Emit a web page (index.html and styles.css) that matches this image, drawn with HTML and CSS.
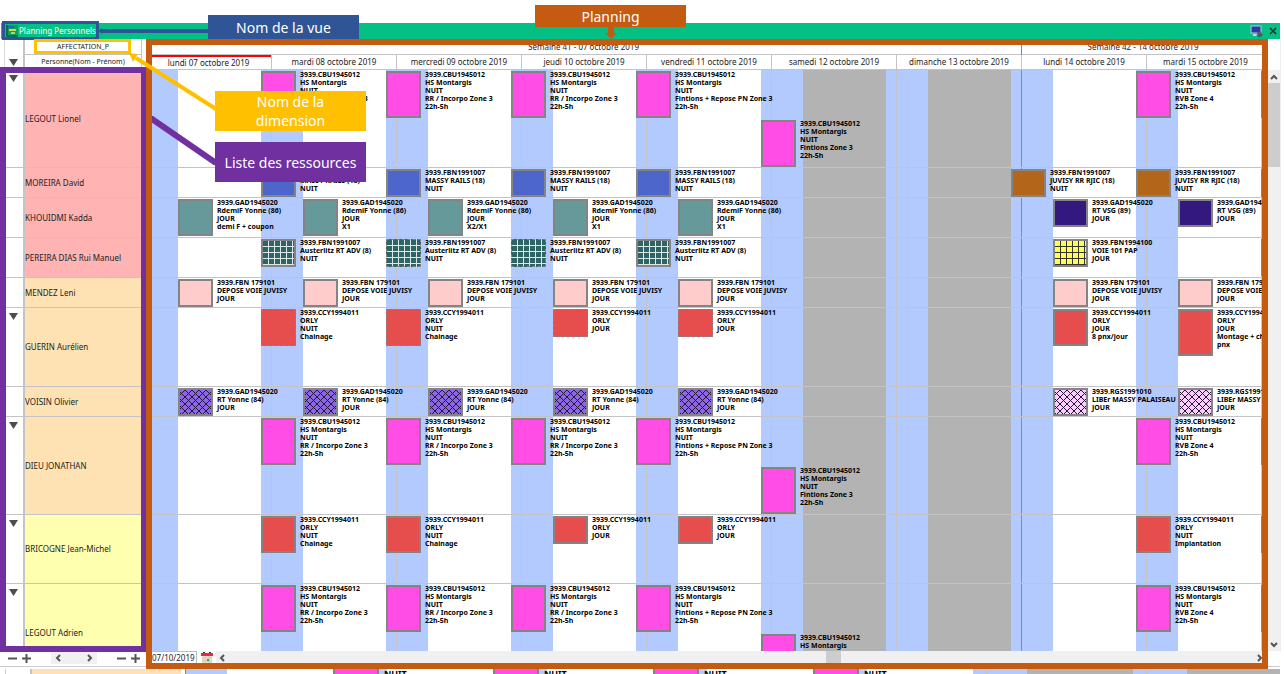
FILE: index.html
```html
<!DOCTYPE html>
<html lang="fr">
<head>
<meta charset="utf-8">
<title>Planning Personnels</title>
<link rel="stylesheet" href="styles.css">
</head>
<body>
<header class="titlebar">
  <h1 class="view-name">
    <svg class="view-icon" viewBox="0 0 12 12" aria-hidden="true">
      <path d="M0 0h12v12H0z" fill="#0a9f68"/>
      <path d="M1 0v11h11" fill="none" stroke="#123b2c" stroke-width="1"/>
      <path d="M2 2h6" stroke="#2c5fc4" stroke-width="2"/>
      <path d="M3 5h7" stroke="#e8d040" stroke-width="2"/>
      <path d="M5 8h4" stroke="#9be36a" stroke-width="2"/>
    </svg>
    Planning Personnels
  </h1>
  <div class="title-actions">
    <button class="icon-btn" aria-label="Affichage">
      <svg width="13" height="13" viewBox="0 0 13 13"><rect x="1" y="1" width="10" height="7" fill="#2a3aa8" stroke="#b9c6dc"/><path d="M3 10h5" stroke="#c8d2de" stroke-width="2"/><circle cx="9.500" cy="9.500" r="2" fill="none" stroke="#4a5360" stroke-width="2" stroke-dasharray="1.500 .6"/><circle cx="9.500" cy="9.500" r="1.500" fill="#4a5360"/></svg>
    </button>
    <button class="icon-btn" aria-label="Fermer">
      <svg width="8" height="8" viewBox="0 0 8 8"><path d="M1 1l6 6M7 1L1 7" stroke="#16302a" stroke-width="1.500"/></svg>
    </button>
  </div>
</header>

<main class="workspace">
  <section class="planner">
    <div class="head">
      <div class="head-toggle"><svg class="tri" viewBox="0 0 9 7"><path d="M0 0h9L4.500 7z"/></svg></div>
      <div class="head-names">
        <div class="dimension">AFFECTATION_P</div>
        <div class="dimension-field">Personne(Nom - Prénom)</div>
      </div>
      <div class="head-time">
        <div class="weeks"><span>Semaine 41 - 07 octobre 2019</span><span>Semaine 42 - 14 octobre 2019</span></div>
        <div class="days" id="days"></div>
      </div>
    </div>
    <div class="rows" id="rows"></div>
  </section>
  <div class="vscroll">
    <button class="icon-btn" aria-label="Monter"><svg width="8" height="6" viewBox="0 0 8 6"><path d="M1 5l3-3 3 3"/></svg></button>
    <div class="vthumb"></div>
    <button class="icon-btn" aria-label="Descendre"><svg width="8" height="6" viewBox="0 0 8 6"><path d="M1 1l3 3 3-3"/></svg></button>
  </div>
</main>

<div class="toolbar">
  <div class="left-tools">
    <button class="icon-btn" aria-label="Réduire les lignes"><svg width="9" height="9" viewBox="0 0 9 9"><path d="M0 4.500h9"/></svg></button>
    <button class="icon-btn" aria-label="Agrandir les lignes"><svg width="9" height="9" viewBox="0 0 9 9"><path d="M0 4.500h9M4.500 0v9"/></svg></button>
    <div class="pager">
      <button class="icon-btn" aria-label="Précédent"><svg width="6" height="8" viewBox="0 0 6 8"><path d="M5 1L2 4l3 3"/></svg></button>
      <button class="icon-btn" aria-label="Suivant"><svg width="6" height="8" viewBox="0 0 6 8"><path d="M1 1l3 3-3 3"/></svg></button>
    </div>
    <button class="icon-btn" aria-label="Dézoomer"><svg width="9" height="9" viewBox="0 0 9 9"><path d="M0 4.500h9"/></svg></button>
    <button class="icon-btn" aria-label="Zoomer"><svg width="9" height="9" viewBox="0 0 9 9"><path d="M0 4.500h9M4.500 0v9"/></svg></button>
  </div>
  <input class="date" type="text" value="07/10/2019" aria-label="Date de début">
  <button class="icon-btn calendar" aria-label="Calendrier">
    <svg width="12" height="12" viewBox="0 0 12 12"><rect x="1" y="3" width="10" height="9" fill="#eadfc8"/><rect y="1" width="12" height="3" fill="#f0283c"/><path d="M2 0h2M8 0h2" stroke="#333" stroke-width="2"/><path d="M1 6h10M1 9h10M4 4v8M8 4v8" stroke="#d8ccb2" stroke-width="1"/><rect x="6" y="7" width="2" height="2" fill="#13b36b"/></svg>
  </button>
  <div class="hscroll">
    <button class="icon-btn" aria-label="Défiler à gauche"><svg width="6" height="8" viewBox="0 0 6 8"><path d="M5 1L2 4l3 3"/></svg></button>
    <div class="hthumb"></div>
    <button class="icon-btn" aria-label="Défiler à droite"><svg width="6" height="8" viewBox="0 0 6 8"><path d="M1 1l3 3-3 3"/></svg></button>
  </div>
</div>

<div class="next-view">
  <div class="next-name"></div>
  <div class="next-lane" id="next"></div>
</div>

<div class="notes">
  <div class="frame frame-list"></div>
  <svg class="arrows" viewBox="0 0 400 200" aria-hidden="true">
    <path d="M216 163L152 119" stroke="#7030a0" stroke-width="6"/><path d="M148 116h6l-3 8z" fill="#7030a0"/>
  </svg>
  <div class="frame frame-planning"></div>
  <div class="frame frame-view"></div>
  <div class="frame frame-dimension"></div>
  <svg class="arrows" viewBox="0 0 400 200" aria-hidden="true">
    <path d="M216 109L136 58" stroke="#ffc000" stroke-width="4"/><path d="M129 53l9 1-5 8z" fill="#ffc000"/>
    <path d="M209 31H101" stroke="#2f5597" stroke-width="4"/><path d="M98 31l4-3v6z" fill="#2f5597"/>
  </svg>
  <div class="note note-view">Nom de la vue</div>
  <div class="note note-dimension">Nom de la dimension</div>
  <div class="note note-list">Liste des ressources</div>
  <div class="note note-planning">Planning
    <svg class="down" viewBox="0 0 12 12" aria-hidden="true"><path d="M3 0h6v6h3l-6 6-6-6h3z" fill="#c55a11"/></svg>
  </div>
</div>
<script src="script.js"></script>
</body>
</html>
```

FILE: styles.css
```css
:root {
  --day: 125px;
  --night: #b3caff;
  --line: #c4c4c8;
  --off: #b3b3b3;
}

* { box-sizing: border-box; }

body {
  margin: 0;
  height: 100vh;
  display: flex;
  flex-direction: column;
  position: relative;
  overflow: hidden;
  background: #fff;
  color: #222;
  font: 8px/10px "Noto Sans", "Open Sans", sans-serif;
}

.icon-btn {
  display: flex;
  align-items: center;
  justify-content: center;
  padding: 0;
  border: 0;
  background: none;
}

.titlebar {
  flex: none;
  display: flex;
  justify-content: space-between;
  align-items: center;
  height: 16px;
  margin: 23px 4px 0 1px;
  padding: 0 3px 0 5px;
  background: #05c085;
}

.view-name {
  display: flex;
  align-items: center;
  gap: 1px;
  margin: 0;
  color: #fff;
  font-size: 8px;
  font-weight: 400;
}

.view-icon { width: 12px; height: 12px; }
.title-actions { display: flex; align-items: center; gap: 6px; }

.workspace {
  flex: 1;
  min-height: 0;
  display: flex;
  margin-right: 3px;
  border-right: 1px solid #eee;
}

.planner {
  flex: 1;
  min-width: 0;
  display: flex;
  flex-direction: column;
  overflow: hidden;
  margin-left: 4px;
  border-left: 1px solid #ddd;
}

.head {
  flex: none;
  display: flex;
  height: 31px;
  border-bottom: 1px solid var(--line);
}

.head-toggle {
  width: 20px;
  flex: none;
  padding: 20px 0 0 4px;
  border-right: 2px solid var(--line);
}

.tri { display: block; width: 9px; height: 7px; fill: #4d4d4d; }

.head-names {
  width: 117px;
  flex: none;
  margin-right: 4px;
  border-right: 1px solid var(--line);
  text-align: center;
  font-size: 7px;
}

.dimension { height: 16px; line-height: 15px; border-bottom: 1px solid var(--line); }
.dimension-field { height: 14px; line-height: 14px; }

.head-time { flex: 1; min-width: 0; margin-right: 4px; }

.weeks {
  display: grid;
  grid-template-columns: calc(7 * var(--day)) 1fr;
  height: 16px;
  line-height: 16px;
  border-bottom: 1px solid var(--line);
  text-align: center;
}

.weeks span + span { border-left: 1px solid #888; }

.days {
  display: grid;
  grid-template-columns: repeat(8, var(--day)) 1fr;
  height: 14px;
  line-height: 14px;
  text-align: center;
}

.days span { border-left: 1px solid var(--line); white-space: nowrap; }
.days span:first-child { border-top: 2px solid #f00; border-left: 0; line-height: 11px; }

.rows { flex: 1; min-height: 0; overflow: hidden; }

.row { display: flex; border-bottom: 1px solid var(--line); }
.row-s { height: 30px; }
.row-m { height: 40px; }
.row-l { height: 69px; }
.row-xl { height: 79px; }
.row-xxl { height: 98px; }

.toggle {
  width: 20px;
  flex: none;
  padding: 5px 0 0 4px;
  border-right: 2px solid var(--line);
}

.name {
  width: 117px;
  flex: none;
  display: flex;
  align-items: center;
  margin-right: 4px;
}

.red { background: #ffb3b3; }
.peach { background: #ffe2b3; }
.yellow { background: #ffffb0; }

.lane {
  flex: 1;
  min-width: 0;
  display: grid;
  grid-template-columns: repeat(9, 32px 83px 10px);
  grid-auto-rows: max-content;
  gap: 2px 0;
  padding-top: 1px;
  overflow: hidden;
  background:
    linear-gradient(#8c8c8c, #8c8c8c) 875px 0 / 1px 100% no-repeat,
    linear-gradient(var(--off), var(--off)) 657px 0 / 83px 100% no-repeat,
    linear-gradient(var(--off), var(--off)) 782px 0 / 83px 100% no-repeat,
    repeating-linear-gradient(90deg,
      var(--line) 0 1px, var(--night) 1px 32px, #fff 32px 115px, var(--night) 115px 125px);
}

.event { display: flex; gap: 4px; width: 0; }

.swatch {
  flex: none;
  width: 35px;
  border: 2px solid #848484;
}

.lines-3 { height: 28px; }
.lines-4 { height: 37px; }
.lines-5 { height: 47px; }
.dashed { border: 1px dashed #848484; }

.label {
  margin: 0;
  color: #000;
  font-size: 7px;
  line-height: 8px;
  font-weight: 700;
  white-space: pre;
}

.magenta { background-color: #ff4de6; }
.blue { background-color: #4d66cc; }
.teal { background-color: #669999; }
.rose { background-color: #ffcccc; }
.coral { background-color: #e64d4d; }
.brown { background-color: #b36619; }
.indigo { background-color: #33197f; }

.plaid {
  background:
    repeating-linear-gradient(90deg, transparent 0 5px, #dfe8e8 5px 6px),
    repeating-linear-gradient(transparent 0 5px, #dfe8e8 5px 6px),
    #2f6464;
}

.gold {
  background:
    repeating-linear-gradient(90deg, transparent 0 5px, #333 5px 6px),
    repeating-linear-gradient(transparent 0 5px, #333 5px 6px),
    #ffff4d;
}

.violet, .lilac {
  background-image:
    repeating-linear-gradient(45deg, #221a33 0 1px, transparent 1px 5px),
    repeating-linear-gradient(-45deg, #221a33 0 1px, transparent 1px 5px);
}

.violet { background-color: #8c66e6; }
.lilac { background-color: #ffccff; }

.vscroll {
  flex: none;
  width: 12px;
  display: flex;
  flex-direction: column;
  margin-top: 31px;
  background: #f0f0f0;
}

.vscroll .icon-btn { height: 13px; }
.vthumb { height: 84px; background: #cdcdcd; margin-bottom: auto; }

.vscroll path, .left-tools path, .hscroll path { fill: none; stroke: #555; stroke-width: 2; }

.toolbar {
  flex: none;
  display: flex;
  height: 14px;
  margin: 0 20px 0 0;
}

.left-tools {
  width: 146px;
  flex: none;
  display: flex;
  align-items: center;
  gap: 5px;
  padding: 0 6px 0 8px;
}

.pager {
  display: flex;
  justify-content: space-between;
  align-items: center;
  width: 46px;
  height: 12px;
  margin: 0 auto;
  padding: 0 4px;
  background: #f0f0f0;
}

.date {
  width: 51px;
  flex: none;
  padding: 0 0 0 5px;
  border: 1px solid #bbb;
  background: #fff;
  color: #222;
  font: 8px/12px "Noto Sans", "Open Sans", sans-serif;
}

.calendar { width: 19px; flex: none; }

.hscroll {
  flex: 1;
  display: flex;
  justify-content: space-between;
  align-items: center;
  padding: 0 1px 0 3px;
  background: #f0f0f0;
}

.hthumb { width: 15px; height: 14px; margin-left: 184px; background: #cdcdcd; }

.next-view {
  flex: none;
  display: flex;
  height: 9px;
  margin-right: 4px;
  padding: 4px 0 0 5px;
  overflow: hidden;
  background: linear-gradient(#fff 1px, #ccc 1px 2px, #fff 2px) no-repeat;
}

.next-name {
  width: 181px;
  flex: none;
  border-left: 1px solid #ccc;
  border-right: 1px solid #888;
  background: linear-gradient(90deg, #fff 24px, var(--line) 24px 26px, #ffe0b8 26px 175px, #fff 175px);
}

.next-lane {
  flex: 1;
  min-width: 0;
  display: grid;
  grid-template-columns: repeat(7, 41px 106px 13px);
  background:
    linear-gradient(var(--off), var(--off)) 841px 0 / 106px 100% no-repeat,
    linear-gradient(var(--off), var(--off)) 1001px 0 / 106px 100% no-repeat,
    repeating-linear-gradient(90deg,
      var(--line) 0 1px, var(--night) 1px 41px, #fff 41px 147px, var(--night) 147px 160px);
}

.next-lane .swatch { width: 46px; height: 9px; border-top: 0; }
.next-lane .label { font-size: 9px; line-height: 9px; padding-left: 1px; }

/* Callouts laid over the application */
.notes { position: absolute; inset: 0; pointer-events: none; }
.frame, .note, .arrows { position: absolute; }
.arrows { top: 0; left: 0; width: 400px; height: 200px; }

.frame-list { top: 67px; bottom: 22px; left: 0; width: 147px; border: 6px solid #7030a0; }
.frame-planning { top: 39px; bottom: 5px; left: 146px; right: 16px; border: 6px solid #c55a11; }
.frame-view { top: 21px; left: 2px; width: 97px; height: 19px; border: 3px solid #2f5597; }
.frame-dimension { top: 39px; left: 34px; width: 97px; height: 15px; border: 3px solid #ffc000; }

.note {
  display: flex;
  align-items: center;
  justify-content: center;
  width: 151px;
  color: #fff;
  font-size: 14px;
  line-height: 19px;
  text-align: center;
}

.note-view { top: 15px; left: 208px; height: 24px; background: #2f5597; }
.note-dimension { top: 91px; left: 215px; height: 40px; padding: 0 36px; background: #ffc000; }
.note-list { top: 142px; left: 215px; height: 40px; background: #7030a0; }
.note-planning { top: 5px; left: 535px; height: 22px; background: #c55a11; }
.down { position: absolute; top: 100%; left: 50%; width: 12px; height: 12px; margin-left: -6px; }
```

FILE: script.js
```js
const dayNames = ["lundi 07", "mardi 08", "mercredi 09", "jeudi 10", "vendredi 11",
  "samedi 12", "dimanche 13", "lundi 14", "mardi 15"];

// Night work starts on the eve of the day, day work after the morning band.
const night = (day, color, text, o = {}) => ({ col: day * 3, color, text, ...o });
const shift = (day, color, text, o = {}) => ({ col: day * 3 + 2, color, text, ...o });
const each = (days, make) => days.map(make);

const CBU = "3939.CBU1945012\nHS Montargis\nNUIT\n";
const montargis = () => [
  ...each([1, 2, 3], d => night(d, "magenta", CBU + "RR / Incorpo Zone 3\n22h-5h")),
  night(4, "magenta", CBU + "Fintions + Repose PN Zone 3\n22h-5h"),
  night(5, "magenta", CBU + "Fintions Zone 3\n22h-5h", { line: 2 }),
  night(8, "magenta", CBU + "RVB Zone 4\n22h-5h"),
  night(9, "magenta", "", { lines: 5 }),
];
const CCY = "3939.CCY1994011\nORLY\n";

const resources = [
  { name: "LEGOUT Lionel", tone: "red", size: "xxl", open: true, events: montargis() },
  { name: "MOREIRA David", tone: "red", size: "s", events: [
    ...each([1, 2, 3, 4], d => night(d, "blue", "3939.FBN1991007\nMASSY RAILS (18)\nNUIT")),
    ...each([7, 8], d => night(d, "brown", "3939.FBN1991007\nJUVISY RR RJIC (18)\nNUIT")),
    night(9, "brown", "", { lines: 3 }),
  ] },
  { name: "KHOUIDMI Kadda", tone: "red", size: "m", events: [
    ...each(["demi F + coupon", "X1", "X2/X1", "X1", "X1"],
      (t, d) => shift(d, "teal", "3939.GAD1945020\nRdemiF Yonne (86)\nJOUR\n" + t)),
    ...each([7, 8], d => shift(d, "indigo", "3939.GAD1945020\nRT VSG (89)\nJOUR")),
  ] },
  { name: "PEREIRA DIAS Rui Manuel", tone: "red", size: "m", events: [
    ...each([1, 2, 3, 4], d => night(d, "plaid", "3939.FBN1991007\nAusterlitz RT ADV (8)\nNUIT",
      { dashed: d === 2 || d === 3 })),
    shift(7, "gold", "3939.FBN1994100\nVOIE 101 PAP\nJOUR"),
    night(9, "gold", "", { lines: 4 }),
  ] },
  { name: "MENDEZ Leni", tone: "peach", size: "s", events:
    each([0, 1, 2, 3, 4, 7, 8], d => shift(d, "rose", "3939.FBN 179101\nDEPOSE VOIE JUVISY\nJOUR")) },
  { name: "GUERIN Aurélien", tone: "peach", size: "xl", open: true, events: [
    ...each([1, 2], d => night(d, "coral", CCY + "NUIT\nChainage", { dashed: true })),
    ...each([3, 4], d => shift(d, "coral", CCY + "JOUR", { dashed: true })),
    shift(7, "coral", CCY + "JOUR\n8 pnx/jour"),
    shift(8, "coral", CCY + "JOUR\nMontage + chainage\npnx"),
  ] },
  { name: "VOISIN Olivier", tone: "peach", size: "s", events: [
    ...each([0, 1, 2, 3, 4], d => shift(d, "violet", "3939.GAD1945020\nRT Yonne (84)\nJOUR")),
    ...each([7, 8], d => shift(d, "lilac", "3939.RGS1991010\nLIBEr MASSY PALAISEAU\nJOUR")),
  ] },
  { name: "DIEU JONATHAN", tone: "peach", size: "xxl", open: true, events: montargis() },
  { name: "BRICOGNE Jean-Michel", tone: "yellow", size: "l", open: true, events: [
    ...each([1, 2], d => night(d, "coral", CCY + "NUIT\nChainage")),
    ...each([3, 4], d => shift(d, "coral", CCY + "JOUR")),
    night(8, "coral", CCY + "NUIT\nImplantation"),
    night(9, "coral", "", { lines: 4 }),
  ] },
  { name: "LEGOUT Adrien", tone: "yellow", size: "xxl", open: true, events: montargis() },
];

const triangle = '<svg class="tri" viewBox="0 0 9 7"><path d="M0 0h9L4.500 7z"/></svg>';

const eventHtml = e => `<div class="event" style="grid-area:${e.line || 1}/${e.col}">
  <span class="swatch ${e.color} lines-${e.lines || e.text.split("\n").length}${e.dashed ? " dashed" : ""}"></span>
  <p class="label">${e.text}</p></div>`;

document.getElementById("days").innerHTML =
  dayNames.map(d => `<span>${d} octobre 2019</span>`).join("");

document.getElementById("rows").innerHTML = resources.map(r => `
  <div class="row row-${r.size}">
    <div class="toggle">${r.open ? triangle : ""}</div>
    <div class="name ${r.tone}">${r.name}</div>
    <div class="lane">${r.events.map(eventHtml).join("")}</div>
  </div>`).join("");

document.getElementById("next").innerHTML = [1, 2, 3, 4].map(d =>
  `<div class="event" style="grid-column:${d * 3}"><span class="swatch magenta"></span><p class="label">NUIT</p></div>`).join("");
```
